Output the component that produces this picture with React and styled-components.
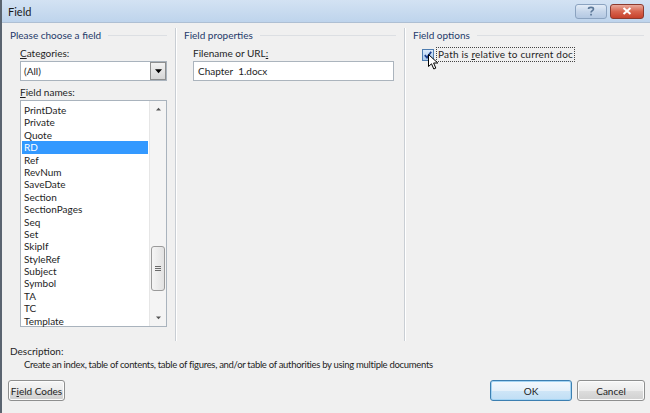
import React from 'react';
import styled, { createGlobalStyle } from 'styled-components';

const GlobalStyle = createGlobalStyle`
  html, body {
    margin: 0;
    padding: 0;
    background: #f0f0f0;
  }
  body {
    font-family: Lato, "Open Sans", sans-serif;
    font-size: 10px;
    color: #1e1e1e;
  }
`;

const Window = styled.div`
  width: 650px;
  height: 413px;
  box-sizing: border-box;
  display: flex;
  flex-direction: column;
  background: #f0f0f0;
  border-left: 2px solid #5a6470;
  overflow: hidden;
`;

const TitleBar = styled.div`
  height: 22px;
  flex: none;
  display: flex;
  align-items: center;
  padding: 0 6px 0 6px;
  background: linear-gradient(to bottom, #d3e2f3 0%, #bed4ec 100%);
  border-bottom: 1px solid #aebfd3;
  font-size: 11px;
  color: #1a1a1a;
`;

const Title = styled.span`
  flex: 1;
`;

const CaptionButton = styled.div`
  width: ${p => p.$w}px;
  height: 15px;
  margin-left: 3px;
  box-sizing: border-box;
  border: 1px solid ${p => (p.$close ? '#8c3a2e' : '#8ba3c0')};
  border-radius: 3px;
  display: flex;
  align-items: center;
  justify-content: center;
  background: ${p =>
    p.$close
      ? 'linear-gradient(to bottom, #e9a99b 0%, #d7644e 50%, #c6412b 100%)'
      : 'linear-gradient(to bottom, #e3ecf7 0%, #c6d6ea 50%, #b3c8e2 100%)'};
`;

const Body = styled.div`
  flex: 1;
  display: flex;
  flex-direction: column;
`;

const Panels = styled.div`
  display: flex;
  height: 318px;
  padding-top: 5px;
  box-sizing: border-box;
`;

const Group = styled.div`
  width: ${p => p.$w}px;
  flex: ${p => (p.$w ? 'none' : '1')};
  box-sizing: border-box;
  padding: 0 ${p => p.$pr}px 0 8px;
  border-left: ${p => (p.$first ? 'none' : '1px solid #c9ced4')};
  box-shadow: ${p => (p.$first ? 'none' : 'inset 1px 0 0 #ffffff')};
  margin-left: ${p => (p.$first ? '0' : '1px')};
`;

const GroupHeader = styled.div`
  display: flex;
  align-items: center;
  height: 14px;
  color: #1e3a6a;
  white-space: nowrap;

  &::after {
    content: '';
    flex: 1;
    height: 1px;
    margin-left: 7px;
    background: #dcdfe3;
  }
`;

const Content = styled.div`
  padding-left: ${p => p.$indent}px;
  padding-top: 5px;
`;

const Label = styled.div`
  height: 13px;
  line-height: 13px;
  margin-bottom: 1px;
  margin-top: ${p => p.$mt || 0}px;
  white-space: nowrap;
`;

const U = styled.span`
  text-decoration: underline;
`;

const Combo = styled.div`
  width: 147px;
  height: 20px;
  box-sizing: border-box;
  border: 1px solid #a9b3bd;
  background: #fff;
  display: flex;
  align-items: center;
  padding-left: 3px;
`;

const ComboText = styled.span`
  flex: 1;
`;

const DropButton = styled.div`
  width: 16px;
  height: 18px;
  box-sizing: border-box;
  border: 1px solid #8e8f8f;
  background: linear-gradient(to bottom, #f2f2f2, #d6d6d6);
  display: flex;
  align-items: center;
  justify-content: center;
`;

const ListBox = styled.div`
  width: 147px;
  height: 227px;
  box-sizing: border-box;
  border: 1px solid #a9b3bd;
  background: #fff;
  display: flex;
`;

const Items = styled.div`
  flex: 1;
  padding: 3px 1px 0 1px;
`;

const Item = styled.div`
  height: 12.4px;
  line-height: 12.4px;
  padding-left: 2px;
  white-space: nowrap;
  background: ${p => (p.$selected ? '#3399ff' : 'transparent')};
  color: ${p => (p.$selected ? '#fff' : '#1e1e1e')};
`;

const ScrollBar = styled.div`
  width: 16px;
  flex: none;
  background: #f4f4f4;
  border-left: 1px solid #e6e6e6;
  display: flex;
  flex-direction: column;
  align-items: center;
`;

const Arrow = styled.div`
  height: 16px;
  width: 100%;
  display: flex;
  align-items: center;
  justify-content: center;
`;

const Track = styled.div`
  flex: 1;
  width: 100%;
  display: flex;
  flex-direction: column;
  align-items: center;
  padding-top: 129px;
  box-sizing: border-box;
`;

const Thumb = styled.div`
  width: 14px;
  height: 45px;
  box-sizing: border-box;
  border: 1px solid #9a9a9a;
  border-radius: 3px;
  background: linear-gradient(to right, #f5f5f5, #e2e2e2);
  display: flex;
  flex-direction: column;
  align-items: center;
  justify-content: center;
  gap: 1px;
`;

const Grip = styled.div`
  width: 6px;
  height: 1px;
  background: #6a6a6a;
`;

const TextInput = styled.div`
  width: 201px;
  height: 20px;
  box-sizing: border-box;
  border: 1px solid #abb4bd;
  background: #fff;
  display: flex;
  align-items: center;
  padding-left: 4px;
  white-space: pre;
`;

const CheckRow = styled.div`
  position: relative;
  display: flex;
  align-items: center;
`;

const CheckBox = styled.div`
  width: 12px;
  height: 12px;
  box-sizing: border-box;
  border: 1px solid #4f7db0;
  background: linear-gradient(to bottom, #dbeafb, #a9c9ec);
  display: flex;
  align-items: center;
  justify-content: center;
`;

const CheckLabel = styled.span`
  margin-left: 2px;
  padding: 0 1px;
  height: 13px;
  line-height: 13px;
  border: 1px dotted #444;
  white-space: nowrap;
  letter-spacing: 0.2px;
`;

const Pointer = styled.svg`
  position: absolute;
  left: 6px;
  top: 7px;
`;

const Description = styled.div`
  padding: 4px 0 0 8px;
`;

const DescText = styled.div`
  padding-left: 14px;
  margin-top: 2px;
  white-space: nowrap;
  font-size: 9.5px;
  letter-spacing: -0.3px;
`;

const Footer = styled.div`
  display: flex;
  align-items: center;
  padding: 0 5px 0 6px;
  margin-top: 10px;
`;

const Spacer = styled.div`
  flex: 1;
`;

const Button = styled.div`
  width: ${p => p.$w}px;
  height: 21px;
  box-sizing: border-box;
  margin-left: ${p => p.$ml || 0}px;
  border: 1px solid ${p => (p.$default ? '#3c7fb1' : '#8e8f8f')};
  border-radius: 3px;
  display: flex;
  align-items: center;
  justify-content: center;
  background: ${p =>
    p.$default
      ? 'linear-gradient(to bottom, #f3f9fd 0%, #e6f1fa 50%, #cfe6f7 51%, #c0def5 100%)'
      : 'linear-gradient(to bottom, #f6f6f6 0%, #ebebeb 50%, #dddddd 51%, #d0d0d0 100%)'};
  box-shadow: inset 0 0 0 1px ${p => (p.$default ? '#a4d4f3' : '#fcfcfc')};
  color: #1e1e1e;
`;

const fieldNames = [
  'PrintDate', 'Private', 'Quote', 'RD', 'Ref', 'RevNum', 'SaveDate', 'Section',
  'SectionPages', 'Seq', 'Set', 'SkipIf', 'StyleRef', 'Subject', 'Symbol', 'TA',
  'TC', 'Template',
];

const TriangleDown = ({ size = 7, color = '#000' }) => (
  <svg width={size} height={Math.ceil(size / 2) + 1} viewBox="0 0 8 5">
    <path d="M0 0 H8 L4 4.5 Z" fill={color} />
  </svg>
);

const TriangleUp = ({ size = 5, color = '#555' }) => (
  <svg width={size} height={Math.ceil(size / 2) + 1} viewBox="0 0 8 5">
    <path d="M0 5 H8 L4 0.5 Z" fill={color} />
  </svg>
);

export default function App() {
  return (
    <>
      <GlobalStyle />
      <Window>
        <TitleBar>
          <Title>Field</Title>
          <CaptionButton $w={32}>
            <svg width="8" height="10" viewBox="0 0 8 10">
              <path d="M1.5 3 C1.5 0.8 6.5 0.8 6.5 3 C6.5 4.6 4 4.6 4 6.6" stroke="#5b7797" strokeWidth="1.6" fill="none" />
              <rect x="3.2" y="7.8" width="1.7" height="1.7" fill="#5b7797" />
            </svg>
          </CaptionButton>
          <CaptionButton $w={34} $close>
            <svg width="10" height="8" viewBox="0 0 10 8">
              <path d="M1.5 1 L8.5 7 M8.5 1 L1.5 7" stroke="#fff" strokeWidth="2" />
            </svg>
          </CaptionButton>
        </TitleBar>
        <Body>
          <Panels>
            <Group $w={172} $pr={7} $first>
              <GroupHeader>Please choose a field</GroupHeader>
              <Content $indent={10}>
                <Label><U>C</U>ategories:</Label>
                <Combo>
                  <ComboText>(All)</ComboText>
                  <DropButton>
                    <TriangleDown />
                  </DropButton>
                </Combo>
                <Label $mt={5}><U>F</U>ield names:</Label>
                <ListBox>
                  <Items>
                    {fieldNames.map(name => (
                      <Item key={name} $selected={name === 'RD'}>{name}</Item>
                    ))}
                  </Items>
                  <ScrollBar>
                    <Arrow><TriangleUp /></Arrow>
                    <Track>
                      <Thumb>
                        <Grip />
                        <Grip />
                        <Grip />
                      </Thumb>
                    </Track>
                    <Arrow><TriangleDown size={5} color="#555" /></Arrow>
                  </ScrollBar>
                </ListBox>
              </Content>
            </Group>
            <Group $w={228} $pr={7}>
              <GroupHeader>Field properties</GroupHeader>
              <Content $indent={9}>
                <Label>Filename or URL<U>:</U></Label>
                <TextInput>Chapter  1.docx</TextInput>
              </Content>
            </Group>
            <Group $pr={6}>
              <GroupHeader>Field options</GroupHeader>
              <Content $indent={9}>
                <CheckRow>
                  <CheckBox>
                    <svg width="8" height="8" viewBox="0 0 8 8">
                      <path d="M0.8 4.2 L3 6.6 L7.2 0.8" stroke="#1c3f8f" strokeWidth="1.8" fill="none" />
                    </svg>
                  </CheckBox>
                  <CheckLabel>Path is <U>r</U>elative to current doc</CheckLabel>
                  <Pointer width="12" height="16" viewBox="0 0 12 16">
                    <path d="M0.5 0.5 L0.5 12.5 L3.5 9.8 L5.8 15 L7.8 14.1 L5.6 9 L9.8 9 Z" fill="#fff" stroke="#000" strokeWidth="1" strokeLinejoin="round" />
                  </Pointer>
                </CheckRow>
              </Content>
            </Group>
          </Panels>
          <Description>
            <div>Description:</div>
            <DescText>
              Create an index, table of contents, table of figures, and/or table of authorities by using multiple documents
            </DescText>
          </Description>
          <Footer>
            <Button $w={57}>F<U>i</U>eld Codes</Button>
            <Spacer />
            <Button $w={82} $default>OK</Button>
            <Button $w={68} $ml={5}>Cancel</Button>
          </Footer>
        </Body>
      </Window>
    </>
  );
}
